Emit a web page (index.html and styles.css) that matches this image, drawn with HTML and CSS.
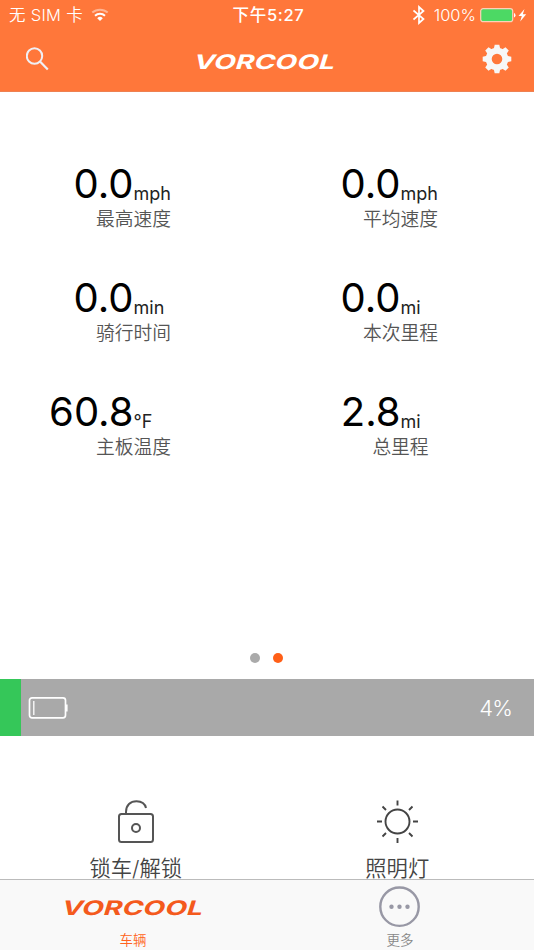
FILE: index.html
```
<!DOCTYPE html>
<html lang="zh-CN">
<head>
    <meta charset="UTF-8">
    <meta name="viewport" content="width=device-width, initial-scale=1.0">
    <title>VORCOOL</title>
    <link rel="stylesheet" href="styles.css">
</head>
<body>
    <header class="header">
        <div class="status-bar">
            <div class="status-left">
                <span class="carrier">无 SIM 卡</span>
                <svg class="wifi" width="18" height="14" viewBox="0 0 18 14" fill="none" stroke="#fff" stroke-width="2">
                    <path d="M1.3 4.6a11.5 11.5 0 0 1 15.4 0" opacity=".45"/>
                    <path d="M4 7.8a7.4 7.4 0 0 1 10 0"/>
                    <path d="M9 13 6.2 10.2a4 4 0 0 1 5.6 0z" fill="#fff" stroke="none"/>
                </svg>
            </div>
            <div class="status-time">下午5:27</div>
            <div class="status-right">
                <svg width="12" height="20" viewBox="0 0 12 20" fill="none" stroke="#fff" stroke-width="1.7">
                    <path d="M.5 5.500 10.500 14 6 18V2l4.500 4L.5 14.500"/>
                </svg>
                <span class="percent">100%</span>
                <svg width="48" height="16" viewBox="0 0 48 16">
                    <rect x=".7" y="1.700" width="32" height="13" rx="2.500" fill="#4cd964" stroke="#ffd0b8" stroke-width="1.200"/>
                    <path d="M34 6v4.500q1.500-.5 1.500-2.250T34 6z" fill="#fff"/>
                    <path d="M44.500 2 38.500 9h3.300l-1.600 5.500 6-7.300h-3.400z" fill="#fff"/>
                </svg>
            </div>
        </div>
        <div class="nav-bar">
            <svg width="24" height="24" viewBox="0 0 24 24" fill="none" stroke="#f0f0f5" stroke-width="2">
                <circle cx="8.500" cy="9" r="7.700"/>
                <path d="M14 14.500 21.800 22.500" stroke-width="2.200"/>
            </svg>
            <svg class="logo logo-white" width="140" height="18" viewBox="0 0 140 18">
                <text transform="translate(-2.500 16) skewX(-17) scale(1.500 1)" textLength="94" lengthAdjust="spacingAndGlyphs">VORCOOL</text>
            </svg>
            <svg width="30" height="30" viewBox="0 0 30 30">
                <g fill="#f7f7f7" transform="translate(15 15)">
                    <path id="tooth" d="M-3.500-9-2.300-14.300h4.600L3.500-9z"/>
                    <use href="#tooth" transform="rotate(45)"/>
                    <use href="#tooth" transform="rotate(90)"/>
                    <use href="#tooth" transform="rotate(135)"/>
                    <use href="#tooth" transform="rotate(180)"/>
                    <use href="#tooth" transform="rotate(225)"/>
                    <use href="#tooth" transform="rotate(270)"/>
                    <use href="#tooth" transform="rotate(315)"/>
                </g>
                <circle cx="15" cy="15" r="8.300" fill="none" stroke="#f7f7f7" stroke-width="6"/>
            </svg>
        </div>
    </header>

    <main class="dashboard">
        <div class="metrics">
            <div class="metric">
                <div class="reading"><span class="value">0.0</span><span class="unit">mph</span></div>
                <div class="label">最高速度</div>
            </div>
            <div class="metric">
                <div class="reading"><span class="value">0.0</span><span class="unit">mph</span></div>
                <div class="label">平均速度</div>
            </div>
            <div class="metric">
                <div class="reading"><span class="value">0.0</span><span class="unit">min</span></div>
                <div class="label">骑行时间</div>
            </div>
            <div class="metric">
                <div class="reading"><span class="value">0.0</span><span class="unit">mi</span></div>
                <div class="label">本次里程</div>
            </div>
            <div class="metric">
                <div class="reading"><span class="value">60.8</span><span class="unit">°F</span></div>
                <div class="label">主板温度</div>
            </div>
            <div class="metric">
                <div class="reading"><span class="value">2.8</span><span class="unit">mi</span></div>
                <div class="label">总里程</div>
            </div>
        </div>
        <div class="pager">
            <span class="dot"></span>
            <span class="dot active"></span>
        </div>
    </main>

    <section class="battery">
        <div class="battery-level" style="width: 4%"></div>
        <svg width="40" height="24" viewBox="0 0 40 24" fill="none" stroke="#fff">
            <rect x="1.500" y="1.800" width="36" height="20" rx="2.500" stroke-width="1.700"/>
            <path d="M5.800 5v14" stroke-width="1.300"/>
            <path d="M38.600 8.500v7" stroke-width="2"/>
        </svg>
        <span class="battery-text">4%</span>
    </section>

    <section class="controls">
        <div class="control">
            <svg width="44" height="44" viewBox="0 0 44 44" fill="none" stroke="#555" stroke-width="2">
                <rect x="5" y="14" width="34" height="28" rx="2.500"/>
                <path d="M12 14v-2C12 5 16.500 1.200 22.500 1.200c5 0 8.500 2.300 9.500 6.800"/>
                <circle cx="22" cy="28" r="4"/>
            </svg>
            <span>锁车/解锁</span>
        </div>
        <div class="control">
            <svg width="44" height="44" viewBox="0 0 44 44" fill="none" stroke="#444" stroke-width="1.900">
                <circle cx="22.500" cy="21.500" r="12"/>
                <path d="M22.500 .5v5M22.500 38v5M2 21.500h5M38 21.500h5M7.500 6.500l3.500 3.500M34 33l3.500 3.500M7.500 36.500 11 33M34 10l3.500-3.500"/>
            </svg>
            <span>照明灯</span>
        </div>
    </section>

    <nav class="tab-bar">
        <div class="tab active">
            <svg class="logo" width="140" height="18" viewBox="0 0 140 18">
                <text transform="translate(-2.500 16) skewX(-17) scale(1.500 1)" textLength="94" lengthAdjust="spacingAndGlyphs">VORCOOL</text>
            </svg>
            <span>车辆</span>
        </div>
        <div class="tab">
            <svg width="42" height="42" viewBox="0 0 42 42" fill="#9898a5">
                <circle cx="20.500" cy="20.700" r="19.200" fill="none" stroke="#9898a5" stroke-width="2.400"/>
                <circle cx="12.500" cy="20.700" r="2.200"/>
                <circle cx="20.500" cy="20.700" r="2.200"/>
                <circle cx="28.500" cy="20.700" r="2.200"/>
            </svg>
            <span>更多</span>
        </div>
    </nav>
</body>
</html>
```

FILE: styles.css
```
* {
    box-sizing: border-box;
}

body {
    margin: 0;
    height: 950px;
    display: flex;
    flex-direction: column;
    overflow: hidden;
    background-color: #fff;
    font-family: Inter, "Noto Sans CJK SC", sans-serif;
}

svg {
    display: block;
    flex-shrink: 0;
}

/* Cabeçalho */
.header {
    height: 92px;
    background-color: #ff773a;
    color: #fff;
    border-bottom: 1px solid #ee8152;
}

.status-bar {
    height: 30px;
    padding: 0 6px 0 9px;
    display: grid;
    grid-template-columns: 1fr auto 1fr;
    align-items: center;
    font-size: 16.5px;
    line-height: 30px;
}

.status-left,
.status-right {
    display: flex;
    align-items: center;
}

.status-left {
    gap: 8px;
    font-weight: 350;
    letter-spacing: 0.3px;
}

.status-right {
    justify-content: flex-end;
    font-weight: 350;
}

.percent {
    margin: 0 4px 0 9px;
}

.status-time {
    font-weight: 500;
    letter-spacing: 0.7px;
}

.nav-bar {
    height: 61px;
    padding: 0 22px 4px 26px;
    display: flex;
    align-items: center;
    justify-content: space-between;
}

.logo {
    overflow: visible;
    fill: #f45a1d;
    font-family: Inter, sans-serif;
    font-size: 20px;
    font-weight: 700;
}

.logo-white {
    margin: 6px 2px 0 0;
    fill: #fff;
}

/* Painel */
.dashboard {
    height: 587px;
    padding-top: 68px;
    display: flex;
    flex-direction: column;
    justify-content: space-between;
}

.metrics {
    display: grid;
    grid-template-columns: 1fr 1fr;
    grid-auto-rows: 114px;
}

.reading {
    display: grid;
    grid-template-columns: 1fr 1fr;
    align-items: end;
    height: 47px;
    color: #000;
}

.value {
    text-align: right;
    font-size: 40px;
    font-weight: 380;
    line-height: 46px;
}

.unit {
    font-size: 18px;
    line-height: 26px;
    color: #222;
}

.label {
    padding-top: 1px;
    text-align: center;
    font-size: 18.75px;
    line-height: 24px;
    font-weight: 350;
    color: #555;
}

.pager {
    height: 42px;
    padding-right: 1px;
    display: flex;
    justify-content: center;
    align-items: center;
    gap: 13px;
}

.dot {
    width: 10px;
    height: 10px;
    border-radius: 50%;
    background-color: #aaa;
}

.dot.active {
    background-color: #ff5f17;
}

/* Bateria */
.battery {
    height: 57px;
    display: flex;
    align-items: center;
    background-color: #a9a9a9;
    color: #fff;
}

.battery-level {
    height: 100%;
    margin-right: 7px;
    background-color: #35c759;
}

.battery-text {
    margin: 0 22px 0 auto;
    font-size: 22px;
    font-weight: 350;
    letter-spacing: -0.8px;
}

/* Controles */
.controls {
    height: 143px;
    padding: 64px 6px 0 5px;
    display: grid;
    grid-template-columns: 1fr 1fr;
    font-size: 21.3px;
    font-weight: 350;
    line-height: 22px;
    color: #444;
}

.control {
    display: flex;
    flex-direction: column;
    align-items: center;
    gap: 13px;
}

/* Abas */
.tab-bar {
    height: 71px;
    display: grid;
    grid-template-columns: 1fr 1fr;
    background-color: #f9f9f9;
    border-top: 1px solid #bbb;
    font-size: 13.5px;
    font-weight: 350;
}

.tab {
    padding: 6px 1px 1px 0;
    display: flex;
    flex-direction: column;
    align-items: center;
    justify-content: space-between;
    line-height: 18px;
    color: #888;
}

.tab .logo {
    margin-top: 13px;
}

.tab.active {
    color: #ff6320;
}
```
